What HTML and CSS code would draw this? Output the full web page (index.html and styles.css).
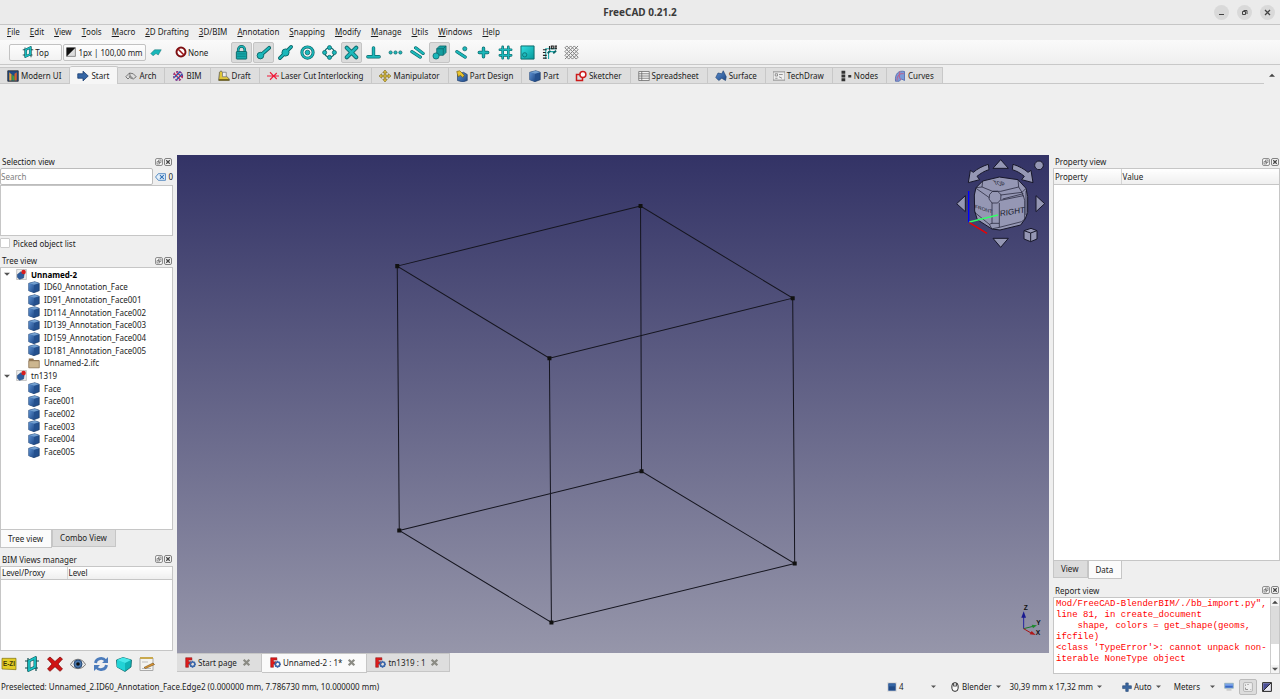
FILE: index.html
```html
<!DOCTYPE html>
<html lang="en">
<head>
<meta charset="utf-8">
<title>FreeCAD 0.21.2</title>
<link rel="stylesheet" href="styles.css">
</head>
<body>
<svg class="defs" aria-hidden="true">
  <defs>
    <linearGradient id="blueFace" x1="0" y1="0" x2="1" y2="1"><stop offset="0" stop-color="#5b8fd0"/><stop offset="1" stop-color="#204a87"/></linearGradient>
    <linearGradient id="tealFace" x1="0" y1="0" x2="1" y2="1"><stop offset="0" stop-color="#34e0e2"/><stop offset="1" stop-color="#06989a"/></linearGradient>
  </defs>
  <symbol id="i-plane" viewBox="0 0 16 16"><g fill="none" stroke="#0b4a4c" stroke-width="1.2"><path d="M1 5h14M1 12h13M4 2v13M12 1v14"/></g><path d="M5 5l6-3v9l-6 3z" fill="#eee" stroke="#0b5d60" stroke-width="3"/><path d="M5 5l6-3v9l-6 3z" fill="none" stroke="#19c3c6" stroke-width="1.800"/></symbol>
  <symbol id="i-style" viewBox="0 0 16 16"><path d="M1 1h14v14H1z" fill="#ddd" stroke="#555"/><path d="M1 1h14L1 15z" fill="#111"/></symbol>
  <symbol id="i-teal-blob" viewBox="0 0 16 16"><path d="M1 10l5-5h9l-4 7-3-2-4 3z" fill="#19b7ba" stroke="#0b6668" stroke-width=".6"/></symbol>
  <symbol id="i-none" viewBox="0 0 16 16"><circle cx="8" cy="8" r="6" fill="#fff" stroke="#7d0f12" stroke-width="2.6"/><path d="M4 4l8 8" stroke="#a01518" stroke-width="2.2"/></symbol>
  <symbol id="i-lock" viewBox="0 0 16 16"><path d="M4.500 8V5a3.500 3.500 0 0 1 7 0v3" fill="none" stroke="#0b6668" stroke-width="2.800"/><path d="M4.500 8V5a3.500 3.500 0 0 1 7 0v3" fill="none" stroke="#1cb8bb" stroke-width="1.300"/><rect x="2.500" y="7" width="11" height="8" rx=".6" fill="#16a9ac" stroke="#0b6668"/><path d="M3.500 9.500h9M3.500 12h9" stroke="#0c8486"/></symbol>
  <symbol id="i-end" viewBox="0 0 16 16"><path d="M5.500 10.500L14 3" stroke="#0b6668" stroke-width="4" stroke-linecap="round"/><circle cx="4.700" cy="11.300" r="3.500" fill="#1cb8bb" stroke="#0b6668"/><path d="M5.500 10.500L14 3" stroke="#1cb8bb" stroke-width="2.200" stroke-linecap="round"/></symbol>
  <symbol id="i-mid" viewBox="0 0 16 16"><path d="M2 14L14 2" stroke="#0b6668" stroke-width="3.800" stroke-linecap="round"/><circle cx="8" cy="8" r="3.800" fill="#1cb8bb" stroke="#0b6668"/><path d="M2 14L14 2" stroke="#1cb8bb" stroke-width="2.100" stroke-linecap="round"/></symbol>
  <symbol id="i-center" viewBox="0 0 16 16"><circle cx="8" cy="8" r="6" fill="none" stroke="#0b6668" stroke-width="3.200"/><circle cx="8" cy="8" r="6" fill="none" stroke="#1cb8bb" stroke-width="1.800"/><circle cx="8" cy="8" r="2.500" fill="#1cb8bb" stroke="#0b6668" stroke-width=".8"/></symbol>
  <symbol id="i-angle" viewBox="0 0 16 16"><circle cx="8" cy="8" r="5" fill="none" stroke="#0b6668" stroke-width="1.600"/><g fill="#1cb8bb" stroke="#0b6668" stroke-width=".8"><circle cx="8" cy="2.800" r="2.200"/><circle cx="8" cy="13.200" r="2.200"/><circle cx="2.800" cy="8" r="2.200"/><circle cx="13.200" cy="8" r="2.200"/></g></symbol>
  <symbol id="i-cross" viewBox="0 0 16 16"><path d="M3 3l10 10M13 3L3 13" stroke="#0b6668" stroke-width="4.400" stroke-linecap="round"/><path d="M3 3l10 10M13 3L3 13" stroke="#1cb8bb" stroke-width="2.800" stroke-linecap="round"/></symbol>
  <symbol id="i-perp" viewBox="0 0 16 16"><path d="M8 3v9M2 12.500h12" stroke="#0b6668" stroke-width="3.600" stroke-linecap="round"/><path d="M8 3v9M2 12.500h12" stroke="#1cb8bb" stroke-width="2.200" stroke-linecap="round"/></symbol>
  <symbol id="i-dots" viewBox="0 0 16 16"><g fill="#1cb8bb" stroke="#0b6668" stroke-width=".8"><circle cx="2.800" cy="8" r="1.700"/><circle cx="8" cy="8" r="1.700"/><circle cx="13.200" cy="8" r="1.700"/></g></symbol>
  <symbol id="i-par" viewBox="0 0 16 16"><path d="M2 7l9 6M6 3l8 6" stroke="#0b6668" stroke-width="3.400" stroke-linecap="round"/><path d="M2 7l9 6M6 3l8 6" stroke="#1cb8bb" stroke-width="2.200" stroke-linecap="round"/></symbol>
  <symbol id="i-special" viewBox="0 0 16 16"><path d="M5 4l3-3h7v7l-3 3H5z" fill="#139da0" stroke="#0b6668" stroke-width=".8"/><path d="M5 4h7v7M12 4l3-3" fill="none" stroke="#0b6668" stroke-width=".8"/><circle cx="4.300" cy="11.700" r="3.300" fill="#1cb8bb" stroke="#0b6668" stroke-width=".8"/></symbol>
  <symbol id="i-near" viewBox="0 0 16 16"><path d="M3 7l9 6" stroke="#0b6668" stroke-width="3.400" stroke-linecap="round"/><path d="M3 7l9 6" stroke="#1cb8bb" stroke-width="2.200" stroke-linecap="round"/><circle cx="11.500" cy="4" r="2.200" fill="#1cb8bb" stroke="#0b6668" stroke-width=".8"/></symbol>
  <symbol id="i-plus" viewBox="0 0 16 16"><path d="M8 3.500v9M3.500 8h9" stroke="#0b6668" stroke-width="3.600" stroke-linecap="round"/><path d="M8 3.500v9M3.500 8h9" stroke="#1cb8bb" stroke-width="2.200" stroke-linecap="round"/></symbol>
  <symbol id="i-grid" viewBox="0 0 16 16"><path d="M5 2v12M11 2v12M2 5h12M2 11h12" stroke="#0b6668" stroke-width="2.800" stroke-linecap="round"/><path d="M5 2v12M11 2v12M2 5h12M2 11h12" stroke="#1cb8bb" stroke-width="1.500" stroke-linecap="round"/></symbol>
  <symbol id="i-wp" viewBox="0 0 16 16"><path d="M1 1h14v14H1z" fill="url(#tealFace)" stroke="#0b6668"/><circle cx="5" cy="10.500" r="2.300" fill="#1cb8bb" stroke="#0b6668" stroke-width=".8"/></symbol>
  <symbol id="i-dim" viewBox="0 0 16 16"><path d="M7 15V7h8M4 15V4h11" stroke="#1ca9ac" stroke-width="1.200" fill="none"/><path d="M1 5h4M1 8h3M1 11h4M1 14h4M8 1v4M10 1h2v3h-2zM14 1h2v3h-2z" stroke="#222" stroke-width="1.200" fill="none"/><path d="M6 9l3-3M12 9l3-3" stroke="#0b6668" stroke-width="2"/></symbol>
  <symbol id="i-mesh" viewBox="0 0 16 16"><path d="M1 3l2-2 2 2 2-2 2 2 2-2 2 2 2-2M1 7l2-2 2 2 2-2 2 2 2-2 2 2 2-2M1 11l2-2 2 2 2-2 2 2 2-2 2 2 2-2M1 15l2-2 2 2 2-2 2 2 2-2 2 2 2-2M1 3l2 2 2-2 2 2 2-2 2 2 2-2 2 2M1 7l2 2 2-2 2 2 2-2 2 2 2-2 2 2M1 11l2 2 2-2 2 2 2-2 2 2 2-2 2 2" stroke="#777" fill="none"/></symbol>
  <symbol id="i-modern" viewBox="0 0 16 16"><path d="M1 1h14v14H1z" fill="#204a87" stroke="#222"/><path d="M3 14V3l3 3v8z" fill="#e8a33c"/><path d="M7 6l3 3v5H7z" fill="#3fa43c"/><path d="M10 14V5l3-2v11z" fill="#d3622a"/></symbol>
  <symbol id="i-arrow" viewBox="0 0 16 16"><path d="M1 5h7V1.500L15 8l-7 6.500V11H1z" fill="#3465a4" stroke="#173a6d"/></symbol>
  <symbol id="i-arch" viewBox="0 0 16 16"><path d="M1 9l5-5 5 1 4 4-4 3-5-2-2 2zM5 8l5 2M6 4l1 4" fill="#ddd" stroke="#555"/></symbol>
  <symbol id="i-bim" viewBox="0 0 16 16"><g fill="none" stroke-width="1.600"><circle cx="8" cy="8" r="6" stroke="#7e2a86" stroke-dasharray="3 2"/><path d="M3 5l8 8M6 3l8 7" stroke="#d2264b"/><path d="M3 10l8-8M6 13l8-8" stroke="#2a4fae"/></g></symbol>
  <symbol id="i-draft" viewBox="0 0 16 16"><path d="M1 12l1-9 2-2 8 8 3 3v2H1z" fill="#e0c63a" stroke="#555"/><path d="M6 3h5v6H6z" fill="#eee" stroke="#777"/><path d="M1 12h14v2H1z" fill="#7a6a1a"/></symbol>
  <symbol id="i-laser" viewBox="0 0 16 16"><path d="M0 8h16M4 3l5 5-5 5M13 4L9 8l4 4" stroke="#ef1a3a" stroke-width="1.500" fill="none"/></symbol>
  <symbol id="i-manip" viewBox="0 0 16 16"><path d="M8 0l3 3.500H9V7h3.500V5L16 8l-3.500 3V9H9v3.500h2L8 16l-3-3.500h2V9H3.500v2L0 8l3.500-3v2H7V3.500H5z" fill="#dfc03a" stroke="#645310" stroke-width=".7"/></symbol>
  <symbol id="i-cube" viewBox="0 0 16 16"><path d="M1 3l8-2 6 2v10l-7 2.500-7-2.500z" fill="#24508e" stroke="#12315c" stroke-width=".8"/><path d="M1 3l7 2v10.500l-7-2.500z" fill="url(#blueFace)"/><path d="M1 3l8-2 6 2-7 2z" fill="#729fcf"/></symbol>
  <symbol id="i-pd" viewBox="0 0 16 16"><path d="M2 6l8-3 5 3v8l-6 2-7-2z" fill="url(#blueFace)" stroke="#12315c" stroke-width=".8"/><path d="M1 2l4-1 6 6-2 3-3-3-3 2z" fill="#e9c32d" stroke="#6b5508" stroke-width=".8"/></symbol>
  <symbol id="i-sketch" viewBox="0 0 16 16"><path d="M2 6h8v8H2z" fill="none" stroke="#cc1b1b" stroke-width="2"/><circle cx="10.500" cy="6" r="4" fill="#fff" stroke="#cc1b1b" stroke-width="2"/></symbol>
  <symbol id="i-sheet" viewBox="0 0 16 16"><path d="M1 2h14v12H1z" fill="#f4f4f4" stroke="#666"/><path d="M1 5h14M1 8h14M1 11h14M5 2v12" stroke="#666"/></symbol>
  <symbol id="i-surf" viewBox="0 0 16 16"><path d="M1 10l3-6 5 1 2-4 4 8-1 5-5-3-4 3z" fill="url(#blueFace)" stroke="#173a6d" stroke-width=".8"/></symbol>
  <symbol id="i-td" viewBox="0 0 16 16"><path d="M0 2.500h16v11H0z" fill="#eee" stroke="#777"/><path d="M3 5h3v3H3zM8 6h5M8 9l4 2M3 11h3" fill="none" stroke="#777"/></symbol>
  <symbol id="i-nodes" viewBox="0 0 16 16"><path d="M2 1h5v4H2zM2 6h5v4H2zM2 11h5v4H2zM11 6.500h4v3.500h-4z" fill="#333"/></symbol>
  <symbol id="i-curves" viewBox="0 0 16 16"><path d="M2 15C1 5 6 0 14 2v12l-4-2-3 3z" fill="#7b9bd8" stroke="#4a62a8"/><path d="M4 14C4 7 8 4 13 5M8 2c-2 4-1 8 1 11" fill="none" stroke="#c35a86" stroke-width="1.300"/></symbol>
  <symbol id="i-float" viewBox="0 0 16 16"><rect x="1" y="1" width="14" height="14" rx="3" fill="#f4f4f4" stroke="#777" stroke-width="1.600"/><path d="M7 4h5v5H7zM4 7h5v5H4z" fill="none" stroke="#777" stroke-width="1.500"/></symbol>
  <symbol id="i-close" viewBox="0 0 16 16"><rect x="1" y="1" width="14" height="14" rx="3" fill="#f4f4f4" stroke="#666" stroke-width="1.600"/><path d="M4.500 4.500l7 7M11.500 4.500l-7 7" stroke="#444" stroke-width="2.400"/></symbol>
  <symbol id="i-clear" viewBox="0 0 20 16"><path d="M1 8l5-6h13v12H6z" fill="#e3effa" stroke="#3b78b8" stroke-width="1.500"/><path d="M9 4.500l7 7M16 4.500l-7 7" stroke="#2f70b5" stroke-width="2"/></symbol>
  <symbol id="i-doc" viewBox="0 0 16 16"><path d="M1 .5h14v15H1z" fill="#eee" stroke="#aaa"/><path d="M2 8l5-4 5 3-1 6-6 2-3-3z" fill="#2e5c9d" stroke="#173a6d" stroke-width=".7"/><circle cx="11" cy="4.500" r="3.300" fill="#d81e1e"/></symbol>
  <symbol id="i-folder" viewBox="0 0 16 16"><path d="M1 2h6l1 2h7v10H1z" fill="#8f7350"/><path d="M1 5h14v9.500H1z" fill="#ccb68f" stroke="#7e684a" stroke-width=".8"/></symbol>
  <symbol id="i-fc" viewBox="0 0 16 16"><path d="M1 1h9v3.500H5V7h4v3H5v5H1z" fill="#e01c1c" stroke="#7c0a0a" stroke-width=".7"/><circle cx="11" cy="10.500" r="3.300" fill="none" stroke="#3b67ab" stroke-width="2.400"/><path d="M11 5.500v2M11 13.500v2M6 10.500h2M14 10.500h2M7.500 7l1.500 1.500M14.500 14L13 12.500M14.500 7L13 8.500M7.500 14L9 12.500" stroke="#3b67ab" stroke-width="1.700"/></symbol>
  <symbol id="i-x" viewBox="0 0 16 16"><path d="M3 3l10 10M13 3L3 13" stroke="#8b8b84" stroke-width="4"/></symbol>
  <symbol id="i-redx" viewBox="0 0 16 16"><path d="M3 1l5 4.500L13 1l2.500 2L11 8l4.500 5-2.500 2.300-5-4.600L3 15.300.5 13 5 8 .5 3z" fill="#cf1414" stroke="#7c0606" stroke-width=".7"/></symbol>
  <symbol id="i-eye" viewBox="0 0 16 16"><path d="M.5 8.500C4 1.500 12 1.500 15.500 8.500 12 14 4 14 .5 8.500z" fill="#e8e8e8" stroke="#777"/><circle cx="8" cy="8" r="4" fill="#4a77ad" stroke="#274a76"/><circle cx="8" cy="8" r="1.800" fill="#111"/></symbol>
  <symbol id="i-sync" viewBox="0 0 16 16"><path d="M2.500 7C3 2 10 1 12.500 4.500M13.500 9C13 14 6 15 3.500 11.500" fill="none" stroke="#4c7cbc" stroke-width="2.800"/><path d="M15 1v6H9zM1 15V9h6z" fill="#4c7cbc"/></symbol>
  <symbol id="i-tealcube" viewBox="0 0 16 16"><path d="M.5 4L7 1.500 15.500 4 15 11l-6 4.500L1 11z" fill="#11b3b6" stroke="#0b6668" stroke-width=".8"/><path d="M1 4l8 3v8l-8-4z" fill="#22d3d6"/><path d="M1 4l6-2.500L15 4 9 7z" fill="#48e8ea"/></symbol>
  <symbol id="i-note" viewBox="0 0 16 16"><path d="M1 2h13v12.500H1z" fill="#f3f3f0" stroke="#aaa"/><path d="M1 1h13v2H1z" fill="#c9a94e"/><path d="M3 6h6M3 12.500h9" stroke="#bbb"/><path d="M5 11.500l9-4.500 1.500 1.500-9 4z" fill="#e39a35" stroke="#6b4a12" stroke-width=".6"/></symbol>
  <symbol id="i-mouse" viewBox="0 0 16 16"><rect x="3" y="1" width="10" height="14" rx="5" fill="#f8f8f8" stroke="#222" stroke-width="1.500"/><path d="M8 4v4M5.500 2v5M10.500 2v5" stroke="#222" stroke-width="1.300"/></symbol>
  <symbol id="i-square" viewBox="0 0 16 16"><path d="M1 1h14v14H1z" fill="#fff" stroke="#ccc"/><path d="M2 2h12v12H2z" fill="#204a87"/><path d="M3 3h10v4H3z" fill="#3465a4"/></symbol>
  <symbol id="i-bplus" viewBox="0 0 16 16"><path d="M6 1.500h4V6h5v4.500h-5V15H6v-4.500H1V6h5z" fill="#3b67a0" stroke="#274a76"/></symbol>
  <symbol id="i-monitor" viewBox="0 0 16 16"><path d="M1 2h14v8H1z" fill="#7aa3ea" stroke="#8aa"/><path d="M2 6h12v3H2z" fill="#3a68c4"/><path d="M4 11h8v3H4z" fill="#ccc"/></symbol>
  <symbol id="i-panel" viewBox="0 0 16 16"><rect x="1" y="1" width="14" height="14" rx="1.500" fill="#eee" stroke="#999"/><path d="M4 4v2M7 4h2M4 9v3h4M12 12h1" stroke="#888" stroke-width="1.400" fill="none"/></symbol>
  <symbol id="i-half" viewBox="0 0 16 16"><path d="M1 1h14v14H1z" fill="#e8e8f2" stroke="#222" stroke-width="1.600"/><path d="M2 2h12L2 14z" fill="#4a4e96"/><path d="M15 1L1 15" stroke="#222" stroke-width="1.500"/></symbol>
  <symbol id="i-down" viewBox="0 0 10 10"><path d="M0 3h10L5 8z" fill="#555"/></symbol>
  <symbol id="i-up" viewBox="0 0 10 10"><path d="M0 8h10L5 3z" fill="#444"/></symbol>
</svg>

<header class="titlebar">
  <h1>FreeCAD 0.21.2</h1>
  <div class="window-buttons">
    <button aria-label="Minimize"><svg viewBox="0 0 15 15"><path d="M5 9.500h5" stroke="#444"/></svg></button>
    <button aria-label="Restore"><svg viewBox="0 0 15 15"><path d="M5.500 6.500h3v3h-3zM6.500 5.500h3.500v3.500" fill="none" stroke="#444"/></svg></button>
    <button aria-label="Close"><svg viewBox="0 0 15 15"><path d="M5 5l5 5M10 5l-5 5" stroke="#444" stroke-width="1.300"/></svg></button>
  </div>
</header>

<nav class="menubar">
  <button><u>F</u>ile</button><button><u>E</u>dit</button><button><u>V</u>iew</button><button><u>T</u>ools</button><button><u>M</u>acro</button><button><u>2</u>D Drafting</button><button><u>3</u>D/BIM</button><button><u>A</u>nnotation</button><button><u>S</u>napping</button><button><u>M</u>odify</button><button><u>M</u>anage</button><button><u>U</u>tils</button><button><u>W</u>indows</button><button><u>H</u>elp</button>
</nav>

<div class="toolbar">
  <div class="tools">
    <span class="grip"></span>
    <button class="boxed plane"><svg><use href="#i-plane"/></svg>Top</button>
    <button class="boxed style"><svg><use href="#i-style"/></svg>1px | 100,00 mm</button>
    <button class="flat" aria-label="Construction mode"><svg><use href="#i-teal-blob"/></svg></button>
    <button class="flat none"><svg><use href="#i-none"/></svg>None</button>
  </div>
  <span class="grip"></span>
  <div class="snaps">
    <button class="on" aria-label="Snap lock"><svg><use href="#i-lock"/></svg></button>
    <button class="on" aria-label="Endpoint"><svg><use href="#i-end"/></svg></button>
    <button aria-label="Midpoint"><svg><use href="#i-mid"/></svg></button>
    <button aria-label="Center"><svg><use href="#i-center"/></svg></button>
    <button aria-label="Angle"><svg><use href="#i-angle"/></svg></button>
    <button class="on" aria-label="Intersection"><svg><use href="#i-cross"/></svg></button>
    <button aria-label="Perpendicular"><svg><use href="#i-perp"/></svg></button>
    <button aria-label="Extension"><svg><use href="#i-dots"/></svg></button>
    <button aria-label="Parallel"><svg><use href="#i-par"/></svg></button>
    <button class="on" aria-label="Special"><svg><use href="#i-special"/></svg></button>
    <button aria-label="Near"><svg><use href="#i-near"/></svg></button>
    <button aria-label="Ortho"><svg><use href="#i-plus"/></svg></button>
    <button aria-label="Grid snap"><svg><use href="#i-grid"/></svg></button>
    <button aria-label="Working plane"><svg><use href="#i-wp"/></svg></button>
    <button aria-label="Dimensions"><svg><use href="#i-dim"/></svg></button>
    <button aria-label="Toggle grid"><svg><use href="#i-mesh"/></svg></button>
  </div>
</div>

<div class="workbenches">
  <div class="wb-tabs">
    <button><svg><use href="#i-modern"/></svg>Modern UI</button>
    <button class="current"><svg><use href="#i-arrow"/></svg>Start</button>
    <button><svg><use href="#i-arch"/></svg>Arch</button>
    <button><svg><use href="#i-bim"/></svg>BIM</button>
    <button><svg><use href="#i-draft"/></svg>Draft</button>
    <button><svg><use href="#i-laser"/></svg>Laser Cut Interlocking</button>
    <button><svg><use href="#i-manip"/></svg>Manipulator</button>
    <button><svg><use href="#i-pd"/></svg>Part Design</button>
    <button><svg><use href="#i-cube"/></svg>Part</button>
    <button><svg><use href="#i-sketch"/></svg>Sketcher</button>
    <button><svg><use href="#i-sheet"/></svg>Spreadsheet</button>
    <button><svg><use href="#i-surf"/></svg>Surface</button>
    <button><svg><use href="#i-td"/></svg>TechDraw</button>
    <button><svg><use href="#i-nodes"/></svg>Nodes</button>
    <button><svg><use href="#i-curves"/></svg>Curves</button>
  </div>
  <button class="collapse" aria-label="Collapse"><svg><use href="#i-up"/></svg></button>
</div>
<div class="ribbon"><span class="dots"></span></div>

<main class="workspace">
  <aside class="dock left">
    <div class="dock-title"><h2>Selection view</h2><button aria-label="Float"><svg><use href="#i-float"/></svg></button><button aria-label="Close"><svg><use href="#i-close"/></svg></button></div>
    <div class="search-row"><input type="text" placeholder="Search" aria-label="Search"><button aria-label="Clear"><svg><use href="#i-clear"/></svg></button><span>0</span></div>
    <div class="pane selection"></div>
    <label class="picked"><input type="checkbox">Picked object list</label>
    <span class="dots"></span>
    <div class="dock-title"><h2>Tree view</h2><button aria-label="Float"><svg><use href="#i-float"/></svg></button><button aria-label="Close"><svg><use href="#i-close"/></svg></button></div>
    <div class="pane tree-pane">
      <ul class="tree">
        <li class="root active"><svg class="twist"><use href="#i-down"/></svg><svg><use href="#i-doc"/></svg>Unnamed-2</li>
        <li><svg><use href="#i-cube"/></svg>ID60_Annotation_Face</li>
        <li><svg><use href="#i-cube"/></svg>ID91_Annotation_Face001</li>
        <li><svg><use href="#i-cube"/></svg>ID114_Annotation_Face002</li>
        <li><svg><use href="#i-cube"/></svg>ID139_Annotation_Face003</li>
        <li><svg><use href="#i-cube"/></svg>ID159_Annotation_Face004</li>
        <li><svg><use href="#i-cube"/></svg>ID181_Annotation_Face005</li>
        <li><svg><use href="#i-folder"/></svg>Unnamed-2.ifc</li>
        <li class="root"><svg class="twist"><use href="#i-down"/></svg><svg><use href="#i-doc"/></svg>tn1319</li>
        <li><svg><use href="#i-cube"/></svg>Face</li>
        <li><svg><use href="#i-cube"/></svg>Face001</li>
        <li><svg><use href="#i-cube"/></svg>Face002</li>
        <li><svg><use href="#i-cube"/></svg>Face003</li>
        <li><svg><use href="#i-cube"/></svg>Face004</li>
        <li><svg><use href="#i-cube"/></svg>Face005</li>
      </ul>
    </div>
    <div class="bottom-tabs"><button class="current">Tree view</button><button>Combo View</button></div>
    <span class="dots"></span>
    <div class="dock-title"><h2>BIM Views manager</h2><button aria-label="Float"><svg><use href="#i-float"/></svg></button><button aria-label="Close"><svg><use href="#i-close"/></svg></button></div>
    <div class="pane levels"><table><thead><tr><th>Level/Proxy</th><th>Level</th></tr></thead></table></div>
    <div class="bim-tools">
      <button aria-label="Add level"><svg viewBox="0 0 48 48"><path d="M3 7h42v34l-42-2z" fill="#e3cd27" stroke="#7a6c0c" stroke-width="2"/><text x="24" y="31" text-anchor="middle" font-family="Liberation Sans, sans-serif" font-size="19" font-weight="bold" fill="#3c3708">E-ZI</text></svg></button>
      <button aria-label="Add proxy"><svg><use href="#i-plane"/></svg></button>
      <button aria-label="Delete"><svg><use href="#i-redx"/></svg></button>
      <button aria-label="Toggle visibility"><svg><use href="#i-eye"/></svg></button>
      <button aria-label="Isolate"><svg><use href="#i-sync"/></svg></button>
      <button aria-label="Save view"><svg><use href="#i-tealcube"/></svg></button>
      <button aria-label="Rename"><svg><use href="#i-note"/></svg></button>
    </div>
  </aside>

  <section class="center">
    <div class="viewport">
      <svg class="scene" viewBox="0 0 871 497">
        <path d="M463 51L220 111L372 203L615 143zM464 316L222 375L374 467L617 408zM463 51L464 316M220 111L222 375M372 203L374 467M615 143L617 408" fill="none" stroke="#15151f" stroke-width="1"/>
        <path d="M461 49h4v4h-4zM218 109h4v4h-4zM370 201h4v4h-4zM613 141h4v4h-4zM462 314h4v4h-4zM220 373h4v4h-4zM372 465h4v4h-4zM615 406h4v4h-4z" fill="#111"/>
      </svg>
      <svg class="navcube" viewBox="0 0 300 285">
        <g fill="#9597b4" stroke="#17172a" stroke-width="3" stroke-linejoin="round">
          <path d="M152 14l23 26h-46zM152 277l23-27h-46zM20 146l26-24v48zM284 146l-26-24v48z"/>
          <path d="M115 28c-17 5-34 14-45 24l-9-6-6 37 34-9-8-10c11-9 22-16 36-20z"/>
          <path d="M189 28c17 5 34 14 45 24l9-6 6 37-34-9 8-10c-11-9-22-16-36-20z"/>
          <circle cx="267" cy="31" r="13"/>
          <path d="M222 227l21-7 18 7v25l-19 8-20-8z"/><path d="M222 227l20 7 19-7M242 234v26" fill="none"/>
          <path d="M98 78L148 66L204 74L228 100L233 125V172L226 191L212 210L150 225L126 222L82 194L74 168L73 120L78 98z"/>
          <g fill="none" stroke-width="2">
            <path d="M98 78l-2 18 32 13h15l9 0 54-13-2-22M78 98l18-2M206 96l10 16 12-12M152 120l64-8 4 12M158 132l62-16M128 109h15l10 10-1 15-9 10h-17l-9-12 2-14z"/>
            <path d="M78 100l40 28M126 144v61l-8 3-44-36M148 144v61h-22M152 136l68-14 4 14v56l-9 8-67 17v-12M118 208l8 14M148 217l-20 4M224 192l3-2M228 108v72"/>
          </g>
        </g>
        <g fill="#17172a" font-family="Liberation Sans, sans-serif">
          <text transform="translate(150 184) skewY(-9)" font-size="24">RIGHT</text>
          <text transform="translate(75 159) skewY(18)" font-size="15">FRONT</text>
          <text transform="translate(134 89) rotate(8) skewX(35)" font-size="17">TOP</text>
        </g>
        <path d="M56 202V108" stroke="#00f" stroke-width="4"/><path d="M58 201l86-21" stroke="#3f6" stroke-width="4"/><path d="M58 203l53 32" stroke="#e00" stroke-width="4"/>
      </svg>
      <svg class="axes" viewBox="0 0 90 105">
        <g stroke-width="3"><path d="M20 74V38" stroke="#2222a0"/><path d="M20 74l28-7" stroke="#1c7a2c"/><path d="M20 74l22 13" stroke="#a11"/></g>
        <path d="M20 22l7 19H13z" fill="#1a1a90"/><path d="M60 64l-16-2 4 11z" fill="#208a30"/><path d="M56 93l-12-12-6 10z" fill="#b01818"/>
        <g font-family="Liberation Sans, sans-serif" font-size="20" font-weight="bold" fill="#111"><text x="20" y="18">Z</text><text x="58" y="62">Y</text><text x="56" y="94">X</text></g>
      </svg>
    </div>
    <div class="doc-tabs">
      <button><svg><use href="#i-fc"/></svg>Start page<svg class="x"><use href="#i-x"/></svg></button>
      <button class="current"><svg><use href="#i-fc"/></svg>Unnamed-2 : 1*<svg class="x"><use href="#i-x"/></svg></button>
      <button><svg><use href="#i-fc"/></svg>tn1319 : 1<svg class="x"><use href="#i-x"/></svg></button>
    </div>
  </section>

  <aside class="dock right">
    <div class="dock-title"><h2>Property view</h2><button aria-label="Float"><svg><use href="#i-float"/></svg></button><button aria-label="Close"><svg><use href="#i-close"/></svg></button></div>
    <div class="pane properties"><table><thead><tr><th>Property</th><th>Value</th></tr></thead></table></div>
    <div class="bottom-tabs"><button>View</button><button class="current">Data</button></div>
    <span class="dots"></span>
    <div class="dock-title"><h2>Report view</h2><button aria-label="Float"><svg><use href="#i-float"/></svg></button><button aria-label="Close"><svg><use href="#i-close"/></svg></button></div>
    <div class="pane report">
      <pre>Mod/FreeCAD-BlenderBIM/./bb_import.py",
line 81, in create_document
    shape, colors = get_shape(geoms,
ifcfile)
&lt;class 'TypeError'&gt;: cannot unpack non-
iterable NoneType object</pre>
      <div class="scrollbar"><svg><use href="#i-up"/></svg><span class="thumb"></span><svg><use href="#i-down"/></svg></div>
    </div>
  </aside>
</main>

<footer class="statusbar">
  <p>Preselected: Unnamed_2.ID60_Annotation_Face.Edge2 (0.000000 mm, 7.786730 mm, 10.000000 mm)</p>
  <button class="count"><svg><use href="#i-square"/></svg><span>4</span><svg class="arrow"><use href="#i-down"/></svg></button>
  <button class="nav-style"><svg><use href="#i-mouse"/></svg><span>Blender</span><svg class="arrow"><use href="#i-down"/></svg></button>
  <button><span>30,39 mm x 17,32 mm</span><svg class="arrow"><use href="#i-down"/></svg></button>
  <button class="auto"><svg><use href="#i-bplus"/></svg><span>Auto</span><svg class="arrow"><use href="#i-down"/></svg></button>
  <button class="units"><span>Meters</span><svg class="arrow"><use href="#i-down"/></svg></button>
  <button class="toggle" aria-label="Report panels"><svg><use href="#i-monitor"/></svg></button>
  <button class="toggle on" aria-label="Views manager"><svg><use href="#i-panel"/></svg></button>
  <button class="toggle" aria-label="Background"><svg><use href="#i-half"/></svg></button>
</footer>
</body>
</html>
```
FILE: styles.css
```css
* { box-sizing: border-box; }
html, body { height: 100%; }
body {
  margin: 0;
  display: flex;
  flex-direction: column;
  background: #efefef;
  color: #1c1c1c;
  font: 8px/11px "Noto Sans", sans-serif;
  overflow: hidden;
}
.defs { position: absolute; width: 0; height: 0; }
button, input { font: inherit; color: inherit; margin: 0; padding: 0; }
button { border: 0; background: none; display: flex; align-items: center; white-space: nowrap; flex: none; }
h1, h2, p, ul, pre { margin: 0; padding: 0; font-size: inherit; }
svg { flex: none; display: block; width: 12px; height: 12px; }

.titlebar { position: relative; height: 25px; flex: none; display: flex; justify-content: center; align-items: center; background: #ebebeb; border-bottom: 1px solid #c6c6c6; }
.titlebar h1 { font-size: 10px; font-weight: 700; color: #3a3a3a; }
.window-buttons { position: absolute; right: 5px; display: flex; gap: 8px; }
.window-buttons button { width: 15px; height: 15px; border-radius: 50%; background: #d9d9d9; }
.window-buttons svg { width: 15px; height: 15px; }

.menubar { height: 15px; flex: none; display: flex; align-items: flex-start; gap: 10px; padding: 1px 0 0 7px; }
.menubar u { text-underline-offset: 1px; }

.toolbar { height: 25px; flex: none; display: flex; align-items: center; background: linear-gradient(#fafafa, #efefef); border-bottom: 1px solid #c8c8c8; padding-left: 4px; }
.tools { display: flex; align-items: center; width: 222px; }
.grip { flex: none; width: 3px; height: 13px; margin-right: 2px; background: radial-gradient(circle, #bbb 30%, transparent 40%) 0 0 / 2px 2px; }
.boxed { height: 17px; border: 1px solid #c2c2c2; border-radius: 2px; background: linear-gradient(#fdfdfd, #f2f2f2); justify-content: center; gap: 1px; margin-right: 1px; }
.plane { width: 53px; }
.style { width: 83px; gap: 2px; }
.style svg { width: 10px; height: 10px; }
.flat { margin-left: 3px; }
.none { margin-left: 13px; gap: 1px; }
.snaps { display: flex; gap: 1px; }
.snaps button { width: 21px; height: 21px; border: 1px solid transparent; border-radius: 2px; justify-content: center; }
.snaps svg { width: 15px; height: 15px; }
.snaps .on { background: #dcdcdc; border-color: #c4c4c4; }

.workbenches { height: 19px; flex: none; display: flex; padding-top: 1px; }
.wb-tabs { flex: 1; display: flex; align-items: flex-end; border-bottom: 1px solid #c8c8c8; }
.wb-tabs button { height: 16px; padding: 0 8px 0 7px; gap: 2px; background: #dedede; border: 1px solid #c8c8c8; border-width: 1px 1px 0 0; }
.wb-tabs .current { height: 18px; background: #f6f6f6; margin-bottom: -1px; border-radius: 2px 2px 0 0; }
.collapse { width: 16px; justify-content: center; }
.collapse svg { width: 6px; height: 6px; }
.ribbon { height: 71px; flex: none; display: flex; align-items: flex-end; }

.dots { flex: none; width: 12px; height: 2px; margin: 0 auto; background: radial-gradient(circle, #aaa 30%, transparent 50%) 0 0 / 2px 2px; }

.workspace { flex: 1; min-height: 0; display: grid; grid-template-columns: 173px minmax(0, 1fr) 227px; gap: 4px; }
.dock { display: flex; flex-direction: column; min-height: 0; }
.right { padding-bottom: 1px; }
.dock-title { height: 13px; flex: none; display: flex; align-items: center; gap: 1px; padding: 0 1px 0 2px; }
.dock-title h2 { flex: 1; font-weight: 400; }
.dock-title svg { width: 8px; height: 8px; }
.pane { background: #fff; border: 1px solid #c6c6c6; }
.search-row { display: flex; align-items: center; gap: 2px; }
.search-row input { flex: 1; min-width: 0; height: 17px; border: 1px solid #bcbcbc; border-radius: 2px; background: #fff; }
.search-row input::placeholder { color: #808080; }
.search-row svg { width: 11px; height: 10px; }
.selection { height: 51px; flex: none; }
.picked { height: 14px; display: flex; align-items: center; gap: 3px; }
.picked input { appearance: none; width: 10px; height: 10px; background: #fff; border: 1px solid #ccc; border-radius: 1px; }
.dock .dots { margin-top: 1px; margin-bottom: 1px; }
.dock .bottom-tabs + .dots { margin-bottom: 2px; }
.tree-pane { flex: 1; min-height: 0; overflow: hidden; }
.tree { list-style: none; display: grid; grid-template-rows: repeat(15, 1fr); height: 190px; }
.tree li { display: flex; align-items: center; gap: 4px; padding-left: 27px; }
.tree .root { padding-left: 3px; }
.tree .root svg { width: 11px; height: 11px; }
.tree .root .twist { width: 6px; height: 6px; margin-right: 2px; }
.tree .active { font-weight: 700; color: #000; }
.bottom-tabs { height: 18px; flex: none; display: flex; align-items: flex-start; }
.bottom-tabs button { height: 17px; padding: 0 8px 0 7px; background: #dcdcdc; border: 1px solid #c6c6c6; border-top: 0; }
.bottom-tabs .current { height: 18px; background: #fbfbfb; }
table { width: 100%; border-collapse: collapse; table-layout: fixed; }
th { height: 13px; padding: 0 0 0 1px; font-weight: 400; text-align: left; background: linear-gradient(#fff, #efefef); border-bottom: 1px solid #c6c6c6; }
th + th { border-left: 1px solid #d4d4d4; }
.levels { flex: none; height: 85px; }
.levels th:first-child { width: 66px; }
.bim-tools { height: 24px; flex: none; display: flex; align-items: center; gap: 7px; padding: 2px 1px 0; }
.bim-tools svg { width: 16px; height: 16px; }

.center { display: flex; flex-direction: column; min-width: 0; }
.viewport { position: relative; flex: 1; min-height: 0; background: linear-gradient(#333366, #9696aa); }
.scene { width: 100%; height: 100%; }
.navcube { position: absolute; right: -1px; top: 0; width: 100px; height: 95px; }
.axes { position: absolute; right: 2px; bottom: 14px; width: 30px; height: 35px; }
.doc-tabs { height: 22px; flex: none; display: flex; align-items: flex-start; }
.doc-tabs button { height: 19px; padding: 0 10px 0 8px; gap: 2px; background: #dedede; border: 1px solid #c6c6c6; border-left: 0; }
.doc-tabs .current { height: 20px; background: #fafafa; }
.doc-tabs svg { width: 11px; height: 11px; }
.doc-tabs .x { width: 9px; height: 9px; margin-left: 3px; }

.properties { flex: 1; min-height: 0; }
.properties th { height: 15px; }
.properties th:first-child { width: 67px; }
.report { height: 77px; flex: none; display: flex; overflow: hidden; }
.report pre { flex: 1; min-width: 0; overflow: hidden; padding: 1px 2px; color: #ff0000; font: 9px/11px "Liberation Mono", monospace; }
.scrollbar { width: 9px; display: flex; flex-direction: column; align-items: center; border-left: 1px solid #ccc; background: #f4f4f4; }
.scrollbar svg { width: 6px; height: 6px; margin: 1px; }
.thumb { flex: 1; width: 8px; background: linear-gradient(#dcdcdc 65%, #fff 65%); }

.statusbar { height: 25px; flex: none; display: flex; align-items: center; padding: 0 4px 0 1px; }
.statusbar p { flex: 1; }
.statusbar button { gap: 2px; margin-right: 9px; }
.statusbar svg { width: 10px; height: 10px; }
.statusbar .arrow { width: 5px; height: 5px; margin-left: 2px; }
.count span { width: 28px; text-align: left; }
.statusbar .count { margin-right: 14px; }
.statusbar .auto { margin-left: 11px; margin-right: 13px; }
.statusbar .units { margin-right: 5px; }
.statusbar .units .arrow { margin-left: 8px; }
.statusbar .toggle { width: 18px; height: 16px; margin: 0 1px 0 0; border: 1px solid transparent; border-radius: 2px; justify-content: center; }
.statusbar .toggle.on { background: #dcdcdc; border-color: #bbb; }
.statusbar .toggle:last-child { margin-right: 0; }
```
